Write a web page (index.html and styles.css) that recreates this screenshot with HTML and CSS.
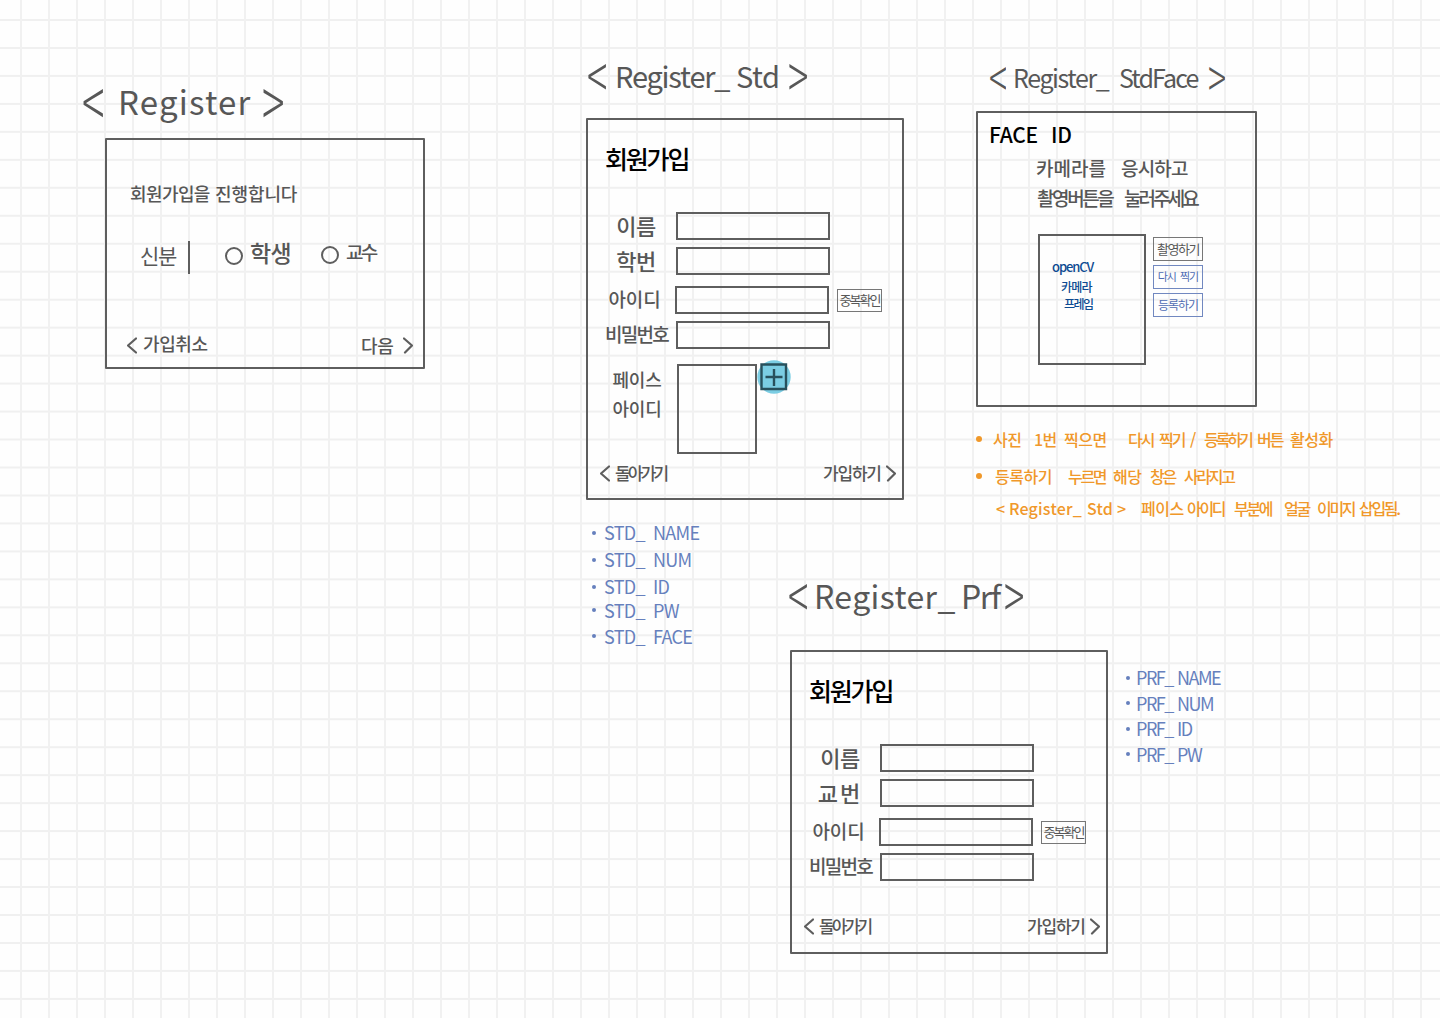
FILE: index.html
```html
<!DOCTYPE html>
<html lang="ko">
<head>
<meta charset="utf-8">
<title>Register wireframes</title>
<link rel="stylesheet" href="styles.css">
</head>
<body>
<main class="canvas">

  <section class="sketch sketch-register">
    <h2 class="title title-register"><span class="angle">&lt;</span><span>Register</span><span class="angle">&gt;</span></h2>
    <div class="card card-register">
      <p class="intro"><span>회원가입을</span><span>진행합니다</span></p>
      <div class="roles">
        <span class="role-label">신분</span>
        <i class="divider"></i>
        <i class="radio"></i>
        <span class="role-student">학생</span>
        <i class="radio radio-up"></i>
        <span class="role-prof">교수</span>
      </div>
      <div class="footer">
        <svg class="chev" viewBox="0 0 10 16"><path d="M9 1L1 8l8 7"/></svg>
        <span class="cancel">가입취소</span>
        <span class="next">다음</span>
        <svg class="chev" viewBox="0 0 10 16"><path d="M1 1l8 7-7 7"/></svg>
      </div>
    </div>
  </section>

  <section class="sketch sketch-std">
    <h2 class="title title-std"><span class="angle">&lt;</span><span class="tight">Register_</span><span>Std</span><span class="angle">&gt;</span></h2>
    <div class="card card-form">
      <h3 class="heading">회원가입</h3>
      <div class="field"><span class="label big">이름</span><i class="input"></i></div>
      <div class="field"><span class="label big">학번</span><i class="input"></i></div>
      <div class="field id-field"><span class="label">아이디</span><i class="input"></i><span class="check">중복확인</span></div>
      <div class="field"><span class="label pw">비밀번호</span><i class="input"></i></div>
      <div class="field face-field">
        <span class="label face-label">페이스<br>아이디</span>
        <i class="face-box"></i>
        <svg class="plus" viewBox="0 0 34 34"><circle cx="17" cy="17" r="16.7"/><path d="M4.5 4.5h24.500v24.500h-24.500zM17 9v17M8.500 17h17"/></svg>
      </div>
      <div class="footer footer-form">
        <svg class="chev" viewBox="0 0 10 16"><path d="M9 1L1 8l8 7"/></svg>
        <span class="back">돌아가기</span>
        <span class="join">가입하기</span>
        <svg class="chev" viewBox="0 0 10 16"><path d="M1 1l8 7-7 7"/></svg>
      </div>
    </div>
    <ul class="vars vars-std">
      <li class="loose"><i class="dot"></i><span>STD_</span><span>NAME</span></li>
      <li class="looser"><i class="dot"></i><span>STD_</span><span>NUM</span></li>
      <li class="short"><i class="dot"></i><span>STD_</span><span>ID</span></li>
      <li class="short loose"><i class="dot"></i><span>STD_</span><span>PW</span></li>
      <li><i class="dot"></i><span>STD_</span><span>FACE</span></li>
    </ul>
  </section>

  <section class="sketch sketch-face">
    <h2 class="title title-face"><span class="angle">&lt;</span><span>Register_</span><span class="tight">StdFace</span><span class="angle">&gt;</span></h2>
    <div class="card card-face">
      <h3 class="heading heading-face"><span>FACE</span><span>ID</span></h3>
      <p class="guide guide-1"><span>카메라를</span><span>응시하고</span></p>
      <p class="guide guide-2"><span>촬영버튼을</span><span>눌러주세요</span></p>
      <div class="camera">
        <div class="frame">
          <span class="frame-cv">openCV</span>
          <span class="frame-kr">카메라</span>
          <span class="frame-kr frame-last">프레임</span>
        </div>
        <div class="actions">
          <span class="action shoot">촬영하기</span>
          <span class="action retake"><span>다시</span><span>찍기</span></span>
          <span class="action submit">등록하기</span>
        </div>
      </div>
    </div>
    <div class="notes">
      <p class="note note-1"><i class="dot"></i><span>사진</span><span>1번</span><span>찍으면</span><span>다시</span><span>찍기</span><span>/</span><span class="narrow">등록하기</span><span>버튼</span><span>활성화</span></p>
      <p class="note note-2"><i class="dot"></i><span>등록하기</span><span class="narrow">누르면</span><span>해당</span><span class="narrow">창은</span><span class="narrow">사라지고</span></p>
      <p class="note note-3"><span>&lt;</span><span class="latin">Register_</span><span class="latin">Std</span><span>&gt;</span><span>페이스</span><span class="narrow">아이디</span><span class="narrow">부분에</span><span class="narrow">얼굴</span><span class="narrow">이미지</span><span class="narrow">삽입됨.</span></p>
    </div>
  </section>

  <section class="sketch sketch-prf">
    <h2 class="title title-prf"><span class="angle">&lt;</span><span>Register_</span><span class="tight">Prf</span><span class="angle">&gt;</span></h2>
    <div class="prf-row">
      <div class="card card-form card-prf">
        <h3 class="heading">회원가입</h3>
        <div class="field"><span class="label big">이름</span><i class="input"></i></div>
        <div class="field"><span class="label big spaced">교번</span><i class="input"></i></div>
        <div class="field id-field"><span class="label">아이디</span><i class="input"></i><span class="check">중복확인</span></div>
        <div class="field"><span class="label pw">비밀번호</span><i class="input"></i></div>
        <div class="footer footer-form">
          <svg class="chev" viewBox="0 0 10 16"><path d="M9 1L1 8l8 7"/></svg>
          <span class="back">돌아가기</span>
          <span class="join">가입하기</span>
          <svg class="chev" viewBox="0 0 10 16"><path d="M1 1l8 7-7 7"/></svg>
        </div>
      </div>
      <ul class="vars vars-prf">
        <li><i class="dot"></i><span>PRF_</span><span>NAME</span></li>
        <li><i class="dot"></i><span>PRF_</span><span>NUM</span></li>
        <li><i class="dot"></i><span>PRF_</span><span>ID</span></li>
        <li><i class="dot"></i><span>PRF_</span><span>PW</span></li>
      </ul>
    </div>
  </section>

</main>
</body>
</html>
```
FILE: styles.css
```css
:root {
  --ink: #575757;
  --blue: #6680bd;
  --orange: #f0982a;
}
* { box-sizing: border-box; margin: 0; padding: 0; }
body {
  background: #fefefe;
  color: var(--ink);
  font-family: "Noto Sans CJK KR", sans-serif;
}
i { display: block; flex: none; }
svg { display: block; flex: none; fill: none; }
span { white-space: nowrap; }
ul { list-style: none; }

.canvas {
  position: relative;
  width: 1440px;
  height: 1018px;
  overflow: hidden;
  background-image:
    linear-gradient(90deg, #f1f1f1 2px, transparent 2px),
    linear-gradient(#f0f0f0 2px, transparent 2px);
  background-size: 28px 28px, 28px 27.97px;
  background-position: 20px 0, 0 19px;
}

/* The sketches sit freely on the canvas */
.sketch { position: absolute; }
.sketch-register { left: 84px; top: 83px; }
.sketch-std { left: 586px; top: 57px; }
.sketch-face { left: 976px; top: 59px; }
.sketch-prf { left: 790px; top: 577px; }

.title {
  display: grid;
  align-items: center;
  height: 40px;
  padding-bottom: 4px;
  line-height: 36px;
  font-weight: 400;
}
.angle { margin: -4px 0 0 -2px; font-size: 42px; font-weight: 300; transform: scaleY(1.6); }
.title-register { grid-template-columns: 34px 146px 24px; font-size: 33px; letter-spacing: 1.2px; }
.title-std { grid-template-columns: 26px 121px 54px 20px; padding-left: 3px; font-size: 29px; letter-spacing: -.5px; }
.title-std .tight { letter-spacing: -1.2px; }
.title-face { grid-template-columns: 22px 106px 91px 20px; padding-left: 15px; font-size: 25px; letter-spacing: -1.4px; }
.title-std .angle, .title-prf .angle { font-size: 38px; }
.title-face .angle { margin-top: -2px; font-size: 34px; }
.title-face .tight { letter-spacing: -1.9px; }
.title-prf { grid-template-columns: 24px 147px 45px 20px; font-size: 32px; letter-spacing: .4px; }
.title-prf .tight { letter-spacing: -1.4px; }

.card { border: 2px solid #5e5e5e; border-radius: 1px; }
.card-register { width: 320px; height: 231px; margin: 15px 0 0 21px; font-weight: 500; }
.card-form { width: 318px; height: 382px; margin-top: 21px; font-weight: 500; }
.card-face { width: 281px; height: 296px; margin-top: 12px; font-weight: 500; }
.card-prf { height: 304px; margin-top: 0; }

.intro {
  display: grid;
  grid-template-columns: 85px 84px;
  margin: 41px 0 0 23px;
  font-size: 18px;
  line-height: 24px;
  letter-spacing: -.1px;
}
.intro span:first-child { letter-spacing: -.6px; }
.roles {
  display: grid;
  grid-template-columns: 48px 37px 25px 71px 25px 34px;
  align-items: center;
  height: 34px;
  margin: 35px 0 0 33px;
}
.role-label { margin-top: -4px; font-size: 21px; line-height: 30px; letter-spacing: -1.3px; font-weight: 400; }
.divider { width: 2px; height: 33px; background: #5e5e5e; }
.radio { width: 18px; height: 18px; margin-top: -2px; border: 2px solid #5e5e5e; border-radius: 50%; }
.radio-up { margin-top: -5px; }
.role-student { margin-top: -10px; font-size: 23px; line-height: 30px; letter-spacing: -.6px; }
.role-prof { margin-top: -10px; font-size: 19px; line-height: 30px; letter-spacing: -2.8px; }

.footer {
  display: grid;
  grid-template-columns: 16px 218px 42px 10px;
  align-items: center;
  height: 20px;
  margin: 61px 0 0 20px;
  font-size: 18px;
  line-height: 20px;
}
.chev { width: 10px; height: 17px; stroke: #5e5e5e; stroke-width: 2.2; stroke-linecap: round; stroke-linejoin: round; }
.cancel { margin-top: -4px; letter-spacing: -.4px; }
.next { letter-spacing: -.4px; }
.footer-form {
  grid-template-columns: 15px 208px 63px 9px;
  margin: 9px 0 0 12px;
  font-size: 17px;
}
.back { letter-spacing: -2.8px; }
.join { letter-spacing: -1.2px; }
.card-prf .footer-form { margin-top: 35px; margin-left: 12px; }

.heading {
  margin: 23px 0 39px 17px;
  color: #000;
  font-size: 25px;
  line-height: 30px;
  font-weight: 500;
  letter-spacing: -2.2px;
}
.field {
  display: grid;
  grid-template-columns: 88px 160px 46px;
  align-items: center;
  height: 28px;
  margin-bottom: 7px;
}
.label { padding-left: 5px; text-align: center; font-size: 19px; line-height: 28px; letter-spacing: -.2px; margin-top: -2px; }
.big { padding-left: 8px; font-size: 22px; letter-spacing: -.5px; }
.pw { padding-left: 9px; letter-spacing: -1.7px; margin-top: -3px; }
.spaced { letter-spacing: 2px; }
.input { width: 154px; height: 28px; border: 2px solid #5e5e5e; }
.id-field { margin-top: 11px; }
.id-field .input { margin-left: -1px; }
.check {
  width: 45px;
  height: 23px;
  margin-left: 1px;
  border: 1px solid #777;
  font-size: 13px;
  font-weight: 400;
  line-height: 20px;
  letter-spacing: -1.9px;
  text-align: center;
}
.face-field { grid-template-columns: 89px 80px 34px; align-items: start; height: 90px; margin: 15px 0 0; }
.face-label { margin-top: 1px; padding-left: 9px; font-size: 18px; line-height: 29px; letter-spacing: -.3px; }
.face-box { width: 80px; height: 90px; border: 2px solid #5e5e5e; }
.plus { width: 34px; height: 34px; margin: -4px 0 0 0; }
.plus circle { fill: #7bcde3; }
.plus path { stroke: #28505c; stroke-width: 2.4; }

.vars { color: var(--blue); font-size: 18px; font-weight: 400; }
.vars li { display: grid; align-items: center; height: 25.5px; line-height: 23px; }
.vars .dot { width: 4px; height: 4px; border-radius: 50%; background: currentColor; }
.vars-std { margin: 20px 0 0 6px; letter-spacing: -.7px; }
.vars-std li { grid-template-columns: 12px 49px 50px; }
.vars-std .short { height: 23.5px; }
.vars-std .loose { margin-bottom: 1.5px; }
.vars-std .looser { margin-bottom: 2.5px; }
.vars-prf { margin: 15px 0 0 18px; letter-spacing: -1.5px; }
.vars-prf li { grid-template-columns: 10px 41px 50px; }
.prf-row { display: flex; align-items: flex-start; margin-top: 33px; }

.heading-face {
  display: grid;
  grid-template-columns: 62px 30px;
  margin: 6px 0 0 11px;
  font-size: 21px;
  letter-spacing: -.3px;
}
.guide { display: grid; font-size: 19px; line-height: 30px; }
.guide-1 { grid-template-columns: 85px 70px; margin: 4px 0 0 58px; }
.guide-1 span:last-child { letter-spacing: -.8px; }
.guide-2 { grid-template-columns: 87px 75px; margin-left: 59px; letter-spacing: -2.4px; }
.guide-2 span:last-child { letter-spacing: -2.9px; }
.camera { display: flex; gap: 7px; margin: 21px 0 0 60px; }
.frame {
  display: flex;
  flex-direction: column;
  width: 108px;
  height: 131px;
  padding: 20px 0 0 12px;
  border: 2px solid #5e5e5e;
  color: #0d4b92;
}
.frame-cv { font-size: 13px; line-height: 22px; letter-spacing: -1.1px; }
.frame-kr { padding-left: 9px; font-size: 12px; line-height: 17px; letter-spacing: -.8px; }
.frame-last { padding-left: 12px; letter-spacing: -1.5px; }
.actions { display: flex; flex-direction: column; gap: 4px; padding-top: 3px; }
.action {
  width: 50px;
  height: 24px;
  border: 1px solid #7188c0;
  color: #4f6cb3;
  font-size: 12px;
  font-weight: 400;
  line-height: 21px;
  text-align: center;
  letter-spacing: -1px;
}
.shoot { border-color: #777; color: var(--ink); font-size: 13px; letter-spacing: -1.4px; }
.retake { display: flex; justify-content: center; gap: 4px; font-size: 11px; }

.notes { margin-top: 20px; color: var(--orange); font-size: 16px; font-weight: 500; line-height: 24px; }
.note { display: grid; align-items: center; letter-spacing: -.5px; }
.note .dot { width: 6px; height: 6px; border-radius: 50%; background: currentColor; }
.note-1 { grid-template-columns: 17px 41px 30px 64px 31px 31px 14px 53px 33px 46px; }
.note-1 span:nth-child(5), .note-1 span:nth-child(6), .note-1 span:nth-child(9) { letter-spacing: -2px; }
.note-2 { grid-template-columns: 19px 73px 45px 37px 34px 55px; margin-top: 13px; }
.note-3 { grid-template-columns: 13px 78px 30px 24px 46px 47px 50px 33px 42px 44px; margin: 8px 0 0 20px; }
.note .narrow { letter-spacing: -2.3px; }
.note-1 .narrow { letter-spacing: -3px; }
.note .latin { letter-spacing: .2px; }
```
